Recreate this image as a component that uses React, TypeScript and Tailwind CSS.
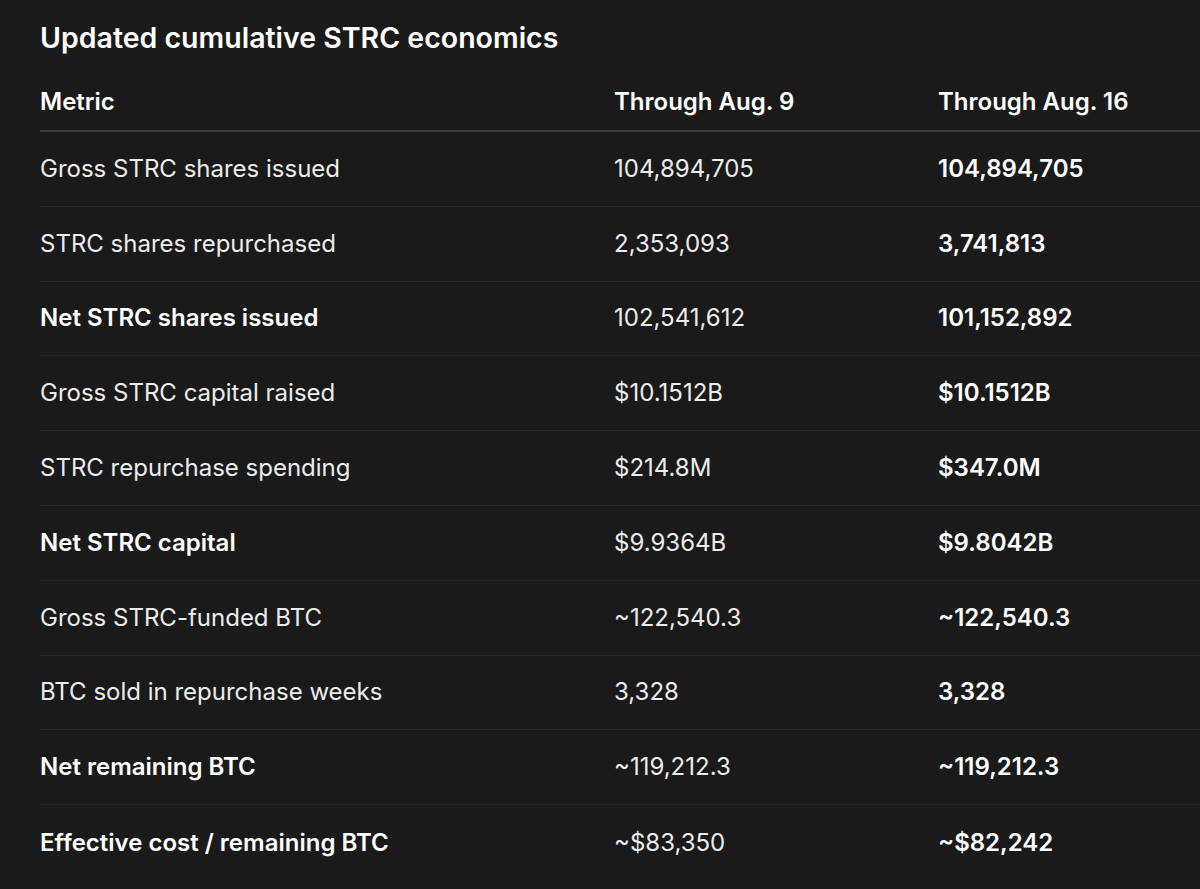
const rows: { label: string; a: string; b: string; bold?: boolean }[] = [
  { label: "Gross STRC shares issued", a: "104,894,705", b: "104,894,705" },
  { label: "STRC shares repurchased", a: "2,353,093", b: "3,741,813" },
  { label: "Net STRC shares issued", a: "102,541,612", b: "101,152,892", bold: true },
  { label: "Gross STRC capital raised", a: "$10.1512B", b: "$10.1512B" },
  { label: "STRC repurchase spending", a: "$214.8M", b: "$347.0M" },
  { label: "Net STRC capital", a: "$9.9364B", b: "$9.8042B", bold: true },
  { label: "Gross STRC-funded BTC", a: "~122,540.3", b: "~122,540.3" },
  { label: "BTC sold in repurchase weeks", a: "3,328", b: "3,328" },
  { label: "Net remaining BTC", a: "~119,212.3", b: "~119,212.3", bold: true },
  { label: "Effective cost / remaining BTC", a: "~$83,350", b: "~$82,242", bold: true },
];

export default function App() {
  return (
    <div
      className="h-[889px] w-[1200px] overflow-hidden bg-[#1a1a1a] pl-10 text-[#ececec]"
      style={{ fontFamily: "Inter, Roboto, 'Noto Sans', sans-serif" }}
    >
      <h2 className="pt-[21px] text-[28.5px] font-semibold leading-[34px] text-white">
        Updated cumulative STRC economics
      </h2>

      <div className="mt-[18px] w-[1260px]">
        <div className="flex h-[59px] items-center border-b-2 border-[#3d3d3d] text-[24px] font-semibold text-white">
          <div className="w-[574px]">Metric</div>
          <div className="w-[324px]">Through Aug. 9</div>
          <div className="flex-1">Through Aug. 16</div>
        </div>

        {rows.map((r) => (
          <div
            key={r.label}
            className="flex h-[74.8px] items-center border-b border-[#272727] text-[24px] last:border-b-0"
          >
            <div className={r.bold ? "w-[574px] font-semibold text-white" : "w-[574px]"}>
              {r.label}
            </div>
            <div className="w-[324px]">{r.a}</div>
            <div className="flex-1 font-semibold text-white">{r.b}</div>
          </div>
        ))}
      </div>
    </div>
  );
}
